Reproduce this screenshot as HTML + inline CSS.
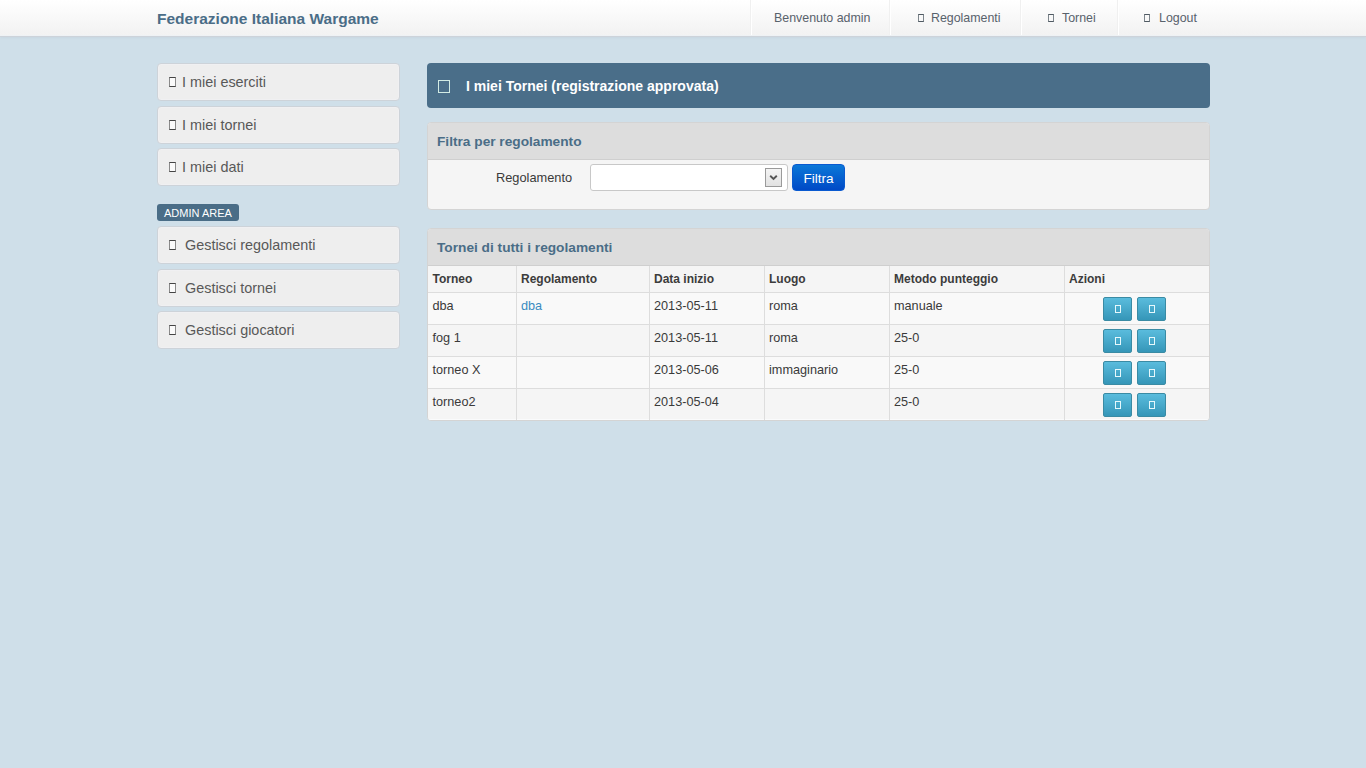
<!DOCTYPE html>
<html><head><meta charset="utf-8">
<style>
*{box-sizing:border-box;margin:0;padding:0}
html,body{width:1366px;height:768px;overflow:hidden}
body{background:#cfdfe9;font-family:"Liberation Sans",sans-serif;color:#444;position:relative}
.abs{position:absolute}
.nav{left:0;top:0;width:1366px;height:36px;background:linear-gradient(#ffffff,#f2f2f2);border-bottom:1px solid #eef2f5;box-shadow:0 1px 0 #cdd3da,0 2px 3px rgba(0,0,0,.04)}
.brand{left:157px;top:10px;font-size:15.5px;font-weight:bold;color:#4a6d87;white-space:nowrap;line-height:18px}
.div{top:0;height:35px;width:2px;border-left:1px solid #f0f0f0;border-right:1px solid #ffffff}
.nt{top:10px;font-size:12.4px;color:#58626c;white-space:nowrap;line-height:16px}
.ntf{top:14px;width:6px;height:8px;border:1px solid #7d858c;border-top:1.5px solid #505a63;border-bottom:1.5px solid #505a63}
.sb{left:157px;width:243px;height:38px;background:#eeeeee;border:1px solid #cdd3d9;border-radius:4px;box-shadow:inset 0 0 0 1px #f0f0f2}
.sbt{position:absolute;top:9px;font-size:14.4px;color:#585858;white-space:nowrap;line-height:18px}
.sbi{position:absolute;left:11px;top:13px;width:7px;height:10px;border:1px solid #8a8a8a;border-top-color:#444;border-bottom-color:#444;background:#fafafa}
.label{left:157px;top:204px;width:82px;height:17px;background:#4a6d87;border-radius:3px;color:#fff;font-size:11px;line-height:19px;padding-left:7px;white-space:nowrap}
.hdr{left:427px;top:63px;width:783px;height:45px;background:#4a6e89;border-radius:4px}
.panel{left:427px;width:783px;border:1px solid #d4d4d4;border-radius:4px;background:#f5f5f5;overflow:hidden}
.ph{height:37px;background:#dddddd;border-bottom:1px solid #cfcfcf;position:relative}
.pht{position:absolute;left:9px;top:11px;font-size:13.7px;font-weight:bold;color:#4a6d87;white-space:nowrap;line-height:16px}
table{border-collapse:collapse;width:781px;font-size:12.7px;table-layout:fixed}
td,th{border-left:1px solid #dddddd;border-top:1px solid #dddddd;text-align:left;vertical-align:top;padding:0 4px 0 4.5px;white-space:nowrap;color:#3a3a3a}
td:first-child,th:first-child{border-left:none}
th{height:26px;font-weight:bold;font-size:12px;padding-top:6px;color:#3c3c3c;background:#f5f5f5}
tr:first-child th{border-top:none}
td{height:32px;padding-top:6px}
tr.odd td{background:#f9f9f9}
tr.even td{background:#f5f5f5}
tr:last-child td{box-shadow:inset 0 -1px 0 #fafbfc}
a{color:#3a8bc0;text-decoration:none}
.btn{position:absolute;width:29px;height:24px;border-radius:2px;background:linear-gradient(#5abcdd,#3596b8);border:1px solid #3a8ba4}
.btn i{position:absolute;left:10.5px;top:7px;width:6.5px;height:8px;border:1.3px solid #e6f8fc}
</style></head><body>
<div class="abs nav"></div>
<div class="abs brand">Federazione Italiana Wargame</div>
<div class="abs div" style="left:750px"></div>
<div class="abs div" style="left:889px"></div>
<div class="abs div" style="left:1020px"></div>
<div class="abs div" style="left:1117px"></div>
<div class="abs nt" style="left:774px">Benvenuto admin</div>
<span class="abs ntf" style="left:918px"></span><div class="abs nt" style="left:931px">Regolamenti</div>
<span class="abs ntf" style="left:1048px"></span><div class="abs nt" style="left:1062px">Tornei</div>
<span class="abs ntf" style="left:1144px"></span><div class="abs nt" style="left:1159px">Logout</div>

<div class="abs sb" style="top:63px"><span class="sbi"></span><span class="sbt" style="left:24px">I miei eserciti</span></div>
<div class="abs sb" style="top:106px"><span class="sbi"></span><span class="sbt" style="left:24px">I miei tornei</span></div>
<div class="abs sb" style="top:148px"><span class="sbi"></span><span class="sbt" style="left:24px">I miei dati</span></div>
<div class="abs label">ADMIN AREA</div>
<div class="abs sb" style="top:226px"><span class="sbi"></span><span class="sbt" style="left:27px">Gestisci regolamenti</span></div>
<div class="abs sb" style="top:269px"><span class="sbi"></span><span class="sbt" style="left:27px">Gestisci tornei</span></div>
<div class="abs sb" style="top:311px"><span class="sbi"></span><span class="sbt" style="left:27px">Gestisci giocatori</span></div>

<div class="abs hdr">
  <span style="position:absolute;left:11px;top:17px;width:12px;height:13px;border:1.5px solid #d2ebe4"></span>
  <span style="position:absolute;left:39px;top:14px;font-size:14px;font-weight:bold;color:#fff;white-space:nowrap;line-height:18px">I miei Tornei (registrazione approvata)</span>
</div>

<div class="abs panel" style="top:122px;height:88px">
  <div class="ph"><span class="pht">Filtra per regolamento</span></div>
  <span style="position:absolute;left:68px;top:47px;font-size:12.8px;color:#3a3a3a;white-space:nowrap;line-height:16px">Regolamento</span>
  <div style="position:absolute;left:162px;top:41px;width:198px;height:27px;background:#fff;border:1px solid #c8c8c8;border-radius:3px">
    <div style="position:absolute;left:174px;top:3px;width:17px;height:19px;border:1px solid #9a9a9a;background:linear-gradient(#f4f4f4,#e2e2e2)">
      <svg width="15" height="17" style="position:absolute;left:0;top:0"><path d="M4.2 6.8 L7.5 10 L10.8 6.8" stroke="#555" stroke-width="1.9" fill="none"/></svg>
    </div>
  </div>
  <div style="position:absolute;left:364px;top:41px;width:53px;height:27px;border-radius:4px;background:linear-gradient(#0b78d8,#0049c6);border:1px solid #0a5ad0;color:#fff;font-size:13.6px;line-height:27px;text-align:center">Filtra</div>
</div>

<div class="abs panel" style="top:228px;height:193px">
  <div class="ph"><span class="pht">Tornei di tutti i regolamenti</span></div>
  <table>
    <colgroup><col style="width:88px"><col style="width:133px"><col style="width:115px"><col style="width:125px"><col style="width:175px"><col style="width:145px"></colgroup>
    <tr><th>Torneo</th><th>Regolamento</th><th>Data inizio</th><th>Luogo</th><th>Metodo punteggio</th><th>Azioni</th></tr>
    <tr class="odd"><td>dba</td><td><a>dba</a></td><td>2013-05-11</td><td>roma</td><td>manuale</td><td></td></tr>
    <tr class="even"><td>fog 1</td><td></td><td>2013-05-11</td><td>roma</td><td>25-0</td><td></td></tr>
    <tr class="odd"><td>torneo X</td><td></td><td>2013-05-06</td><td>immaginario</td><td>25-0</td><td></td></tr>
    <tr class="even"><td>torneo2</td><td></td><td>2013-05-04</td><td></td><td>25-0</td><td></td></tr>
  </table>
  <div class="btn" style="left:675px;top:68px"><i></i></div><div class="btn" style="left:709px;top:68px"><i></i></div>
  <div class="btn" style="left:675px;top:100px"><i></i></div><div class="btn" style="left:709px;top:100px"><i></i></div>
  <div class="btn" style="left:675px;top:132px"><i></i></div><div class="btn" style="left:709px;top:132px"><i></i></div>
  <div class="btn" style="left:675px;top:164px"><i></i></div><div class="btn" style="left:709px;top:164px"><i></i></div>
</div>
</body></html>
